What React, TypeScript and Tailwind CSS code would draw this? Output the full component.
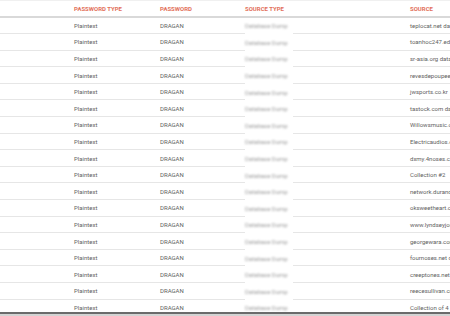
import React from "react";

const sources = [
  "teplocat.net database",
  "toanhoc247.edu.vn",
  "sr-asia.org database",
  "revesdepoupees.com",
  "jwsports.co.kr",
  "tastock.com database",
  "Willowsmusic.com",
  "Electricaudios.com",
  "dxmy.4noses.com",
  "Collection #2",
  "network.durandal.com",
  "oksweetheart.com",
  "www.lyndseyjones.com",
  "georgewara.com",
  "fournoses.net database",
  "creeptones.net",
  "reecesullivan.com",
  "Collection of 4",
];

function Row({ source }: { source: string }) {
  return (
    <div className="flex h-[16.6px] shrink-0 items-stretch text-[6px] text-[#5f5f5f]">
      <div className="w-[74px] shrink-0 border-b border-[#e6e6e6]" />
      <div className="flex w-[86px] shrink-0 items-center border-b border-[#e6e6e6]">Plaintext</div>
      <div className="flex w-[85px] shrink-0 items-center border-b border-[#e6e6e6]">DRAGAN</div>
      <div className="flex w-[48px] shrink-0 items-center bg-white">
        <span className="blur-[1.2px] text-[#9a9a9a]">Database Dump</span>
      </div>
      <div className="w-[117px] shrink-0 border-b border-[#e6e6e6]" />
      <div className="flex w-[200px] shrink-0 items-center whitespace-nowrap border-b border-[#e6e6e6]">
        {source}
      </div>
    </div>
  );
}

export default function App() {
  return (
    <div
      className="flex h-[316px] w-[450px] flex-col overflow-hidden bg-white"
      style={{ fontFamily: "Roboto, 'Liberation Sans', sans-serif" }}
    >
      <div className="flex h-[17.5px] shrink-0 items-center border-t border-b-2 border-t-[#f0f0f0] border-b-[#d9d9d9] text-[6px] font-bold text-[#e2705a] whitespace-nowrap">
        <div className="w-[74px] shrink-0" />
        <div className="w-[86px] shrink-0">PASSWORD TYPE</div>
        <div className="w-[85px] shrink-0">PASSWORD</div>
        <div className="w-[165px] shrink-0">SOURCE TYPE</div>
        <div className="w-[200px] shrink-0">SOURCE</div>
      </div>
      <div className="flex min-h-0 flex-1 flex-col overflow-hidden">
        {sources.map((s, i) => (
          <Row key={i} source={s} />
        ))}
      </div>
      <div className="h-[4px] shrink-0 border-t-2 border-[#6b6b6b] bg-[#d4d4d4]" />
    </div>
  );
}
